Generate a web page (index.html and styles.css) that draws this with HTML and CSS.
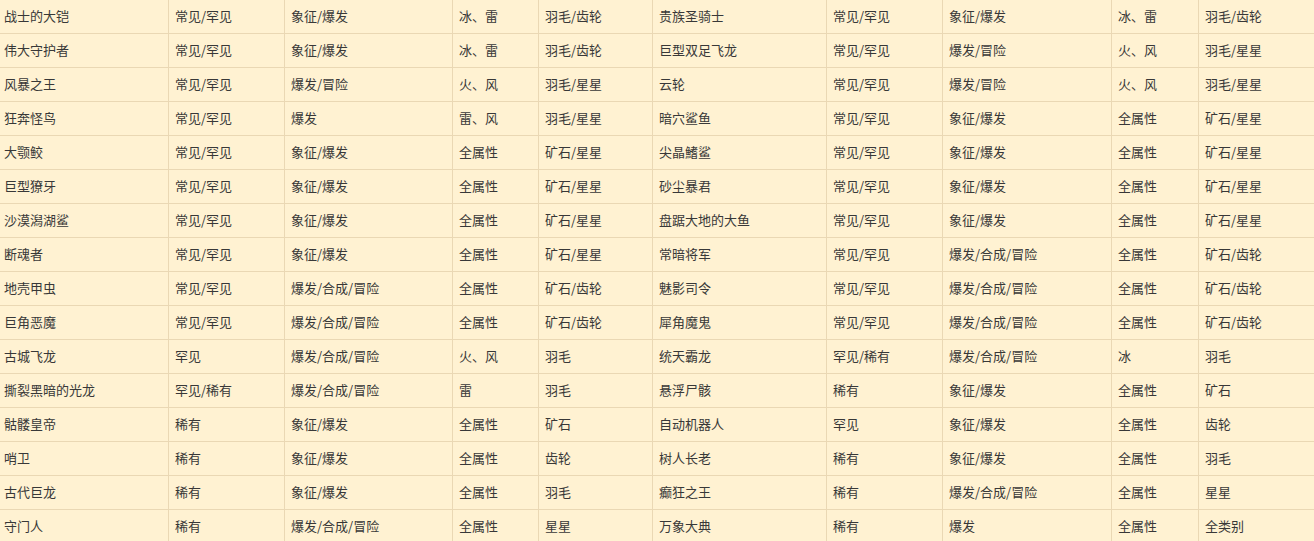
FILE: index.html
```html
<!DOCTYPE html>
<html lang="zh-CN">
<head>
<meta charset="utf-8">
<link rel="stylesheet" href="styles.css">
</head>
<body>
<div class="grid">
<div class="c c1">战士的大铠</div><div class="c">常见/罕见</div><div class="c">象征/爆发</div><div class="c">冰、雷</div><div class="c">羽毛/齿轮</div><div class="c">贵族圣骑士</div><div class="c">常见/罕见</div><div class="c">象征/爆发</div><div class="c">冰、雷</div><div class="c">羽毛/齿轮</div>
<div class="c c1">伟大守护者</div><div class="c">常见/罕见</div><div class="c">象征/爆发</div><div class="c">冰、雷</div><div class="c">羽毛/齿轮</div><div class="c">巨型双足飞龙</div><div class="c">常见/罕见</div><div class="c">爆发/冒险</div><div class="c">火、风</div><div class="c">羽毛/星星</div>
<div class="c c1">风暴之王</div><div class="c">常见/罕见</div><div class="c">爆发/冒险</div><div class="c">火、风</div><div class="c">羽毛/星星</div><div class="c">云轮</div><div class="c">常见/罕见</div><div class="c">爆发/冒险</div><div class="c">火、风</div><div class="c">羽毛/星星</div>
<div class="c c1">狂奔怪鸟</div><div class="c">常见/罕见</div><div class="c">爆发</div><div class="c">雷、风</div><div class="c">羽毛/星星</div><div class="c">暗穴鲨鱼</div><div class="c">常见/罕见</div><div class="c">象征/爆发</div><div class="c">全属性</div><div class="c">矿石/星星</div>
<div class="c c1">大颚鲛</div><div class="c">常见/罕见</div><div class="c">象征/爆发</div><div class="c">全属性</div><div class="c">矿石/星星</div><div class="c">尖晶鰭鲨</div><div class="c">常见/罕见</div><div class="c">象征/爆发</div><div class="c">全属性</div><div class="c">矿石/星星</div>
<div class="c c1">巨型獠牙</div><div class="c">常见/罕见</div><div class="c">象征/爆发</div><div class="c">全属性</div><div class="c">矿石/星星</div><div class="c">砂尘暴君</div><div class="c">常见/罕见</div><div class="c">象征/爆发</div><div class="c">全属性</div><div class="c">矿石/星星</div>
<div class="c c1">沙漠潟湖鲨</div><div class="c">常见/罕见</div><div class="c">象征/爆发</div><div class="c">全属性</div><div class="c">矿石/星星</div><div class="c">盘踞大地的大鱼</div><div class="c">常见/罕见</div><div class="c">象征/爆发</div><div class="c">全属性</div><div class="c">矿石/星星</div>
<div class="c c1">断魂者</div><div class="c">常见/罕见</div><div class="c">象征/爆发</div><div class="c">全属性</div><div class="c">矿石/星星</div><div class="c">常暗将军</div><div class="c">常见/罕见</div><div class="c">爆发/合成/冒险</div><div class="c">全属性</div><div class="c">矿石/齿轮</div>
<div class="c c1">地壳甲虫</div><div class="c">常见/罕见</div><div class="c">爆发/合成/冒险</div><div class="c">全属性</div><div class="c">矿石/齿轮</div><div class="c">魅影司令</div><div class="c">常见/罕见</div><div class="c">爆发/合成/冒险</div><div class="c">全属性</div><div class="c">矿石/齿轮</div>
<div class="c c1">巨角恶魔</div><div class="c">常见/罕见</div><div class="c">爆发/合成/冒险</div><div class="c">全属性</div><div class="c">矿石/齿轮</div><div class="c">犀角魔鬼</div><div class="c">常见/罕见</div><div class="c">爆发/合成/冒险</div><div class="c">全属性</div><div class="c">矿石/齿轮</div>
<div class="c c1">古城飞龙</div><div class="c">罕见</div><div class="c">爆发/合成/冒险</div><div class="c">火、风</div><div class="c">羽毛</div><div class="c">统天霸龙</div><div class="c">罕见/稀有</div><div class="c">爆发/合成/冒险</div><div class="c">冰</div><div class="c">羽毛</div>
<div class="c c1">撕裂黑暗的光龙</div><div class="c">罕见/稀有</div><div class="c">爆发/合成/冒险</div><div class="c">雷</div><div class="c">羽毛</div><div class="c">悬浮尸骸</div><div class="c">稀有</div><div class="c">象征/爆发</div><div class="c">全属性</div><div class="c">矿石</div>
<div class="c c1">骷髅皇帝</div><div class="c">稀有</div><div class="c">象征/爆发</div><div class="c">全属性</div><div class="c">矿石</div><div class="c">自动机器人</div><div class="c">罕见</div><div class="c">象征/爆发</div><div class="c">全属性</div><div class="c">齿轮</div>
<div class="c c1">哨卫</div><div class="c">稀有</div><div class="c">象征/爆发</div><div class="c">全属性</div><div class="c">齿轮</div><div class="c">树人长老</div><div class="c">稀有</div><div class="c">象征/爆发</div><div class="c">全属性</div><div class="c">羽毛</div>
<div class="c c1">古代巨龙</div><div class="c">稀有</div><div class="c">象征/爆发</div><div class="c">全属性</div><div class="c">羽毛</div><div class="c">癫狂之王</div><div class="c">稀有</div><div class="c">爆发/合成/冒险</div><div class="c">全属性</div><div class="c">星星</div>
<div class="c c1">守门人</div><div class="c">稀有</div><div class="c">爆发/合成/冒险</div><div class="c">全属性</div><div class="c">星星</div><div class="c">万象大典</div><div class="c">稀有</div><div class="c">爆发</div><div class="c">全属性</div><div class="c">全类别</div>
</div>
</body>
</html>
```

FILE: styles.css
```css
html, body {
  margin: 0;
  padding: 0;
  background: #fff2d2;
}
body {
  width: 1314px;
  height: 541px;
  overflow: hidden;
  font-family: "Noto Sans CJK SC", "Noto Sans", sans-serif;
  font-size: 13px;
  color: #383838;
}
.grid {
  display: grid;
  grid-template-columns: 169px 116px 168px 86px 114px 174px 116px 169px 87px 115px;
  grid-auto-rows: 34px;
}
.c {
  box-sizing: border-box;
  border-right: 1px solid #ead8b4;
  border-bottom: 1px solid #ead8b4;
  padding: 0 6px 2px;
  display: flex;
  align-items: center;
  white-space: nowrap;
  line-height: 1;
}
.c1 {
  padding-left: 4px;
}
.c:nth-child(10n) {
  border-right: none;
}
```
